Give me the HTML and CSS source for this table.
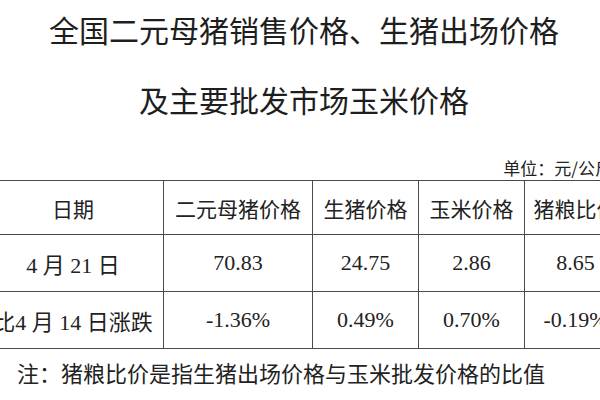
FILE: index.html
```html
<!DOCTYPE html>
<html lang="zh-CN">
<head>
<meta charset="utf-8">
<title>全国二元母猪销售价格、生猪出场价格及主要批发市场玉米价格</title>
<link rel="stylesheet" href="styles.css">
</head>
<body>
<div class="page">
  <h1 class="title">
    <span class="title-line">全国二元母猪销售价格、生猪出场价格</span>
    <span class="title-line">及主要批发市场玉米价格</span>
  </h1>
  <div class="unit">单位：元/公斤</div>
  <table class="prices">
    <colgroup>
      <col class="c-date">
      <col class="c-sow">
      <col class="c-hog">
      <col class="c-corn">
      <col class="c-ratio">
    </colgroup>
    <tr class="head-row">
      <th>日期</th>
      <th>二元母猪价格</th>
      <th>生猪价格</th>
      <th>玉米价格</th>
      <th>猪粮比价</th>
    </tr>
    <tr class="data-row">
      <td>4 月 21 日</td>
      <td>70.83</td>
      <td>24.75</td>
      <td>2.86</td>
      <td>8.65</td>
    </tr>
    <tr class="data-row">
      <td>比4 月 14 日涨跌</td>
      <td>-1.36%</td>
      <td>0.49%</td>
      <td>0.70%</td>
      <td>-0.19%</td>
    </tr>
  </table>
  <p class="note">注：猪粮比价是指生猪出场价格与玉米批发价格的比值</p>
</div>
</body>
</html>
```
FILE: styles.css
```css
html, body {
  margin: 0;
  padding: 0;
  background: #ffffff;
}
body {
  width: 600px;
  height: 400px;
  overflow: hidden;
  color: #222222;
  font-family: "Noto Sans CJK SC", "Noto Sans", sans-serif;
}
.page {
  width: 644px;
  margin-left: -18px;
}
.title {
  margin: -6px 0 0 0;
  font-size: 30px;
  font-weight: normal;
  line-height: 70px;
  text-align: center;
  color: #1e1e1e;
}
.title-line {
  display: block;
}
.unit {
  margin-top: 24px;
  padding-right: 14px;
  text-align: right;
  font-size: 17px;
  line-height: 20px;
  white-space: nowrap;
}
.prices {
  margin-top: 2px;
  width: 644px;
  table-layout: fixed;
  border-collapse: collapse;
}
.c-date { width: 181px; }
.c-sow { width: 149px; }
.c-hog { width: 106px; }
.c-corn { width: 106px; }
.c-ratio { width: 102px; }
.prices th,
.prices td {
  border: 1px solid #4a4a4a;
  padding: 0;
  text-align: center;
  white-space: nowrap;
  overflow: hidden;
}
.prices th {
  font-weight: normal;
  font-size: 21px;
  font-family: "Noto Sans CJK SC", sans-serif;
}
.prices td {
  font-size: 22px;
  font-family: "Liberation Serif", "Noto Sans CJK SC", serif;
}
.head-row { height: 54px; }
.data-row { height: 57px; }
.note {
  margin: 8px 0 0 0;
  padding-left: 35px;
  font-size: 22px;
  line-height: 30px;
}
```
